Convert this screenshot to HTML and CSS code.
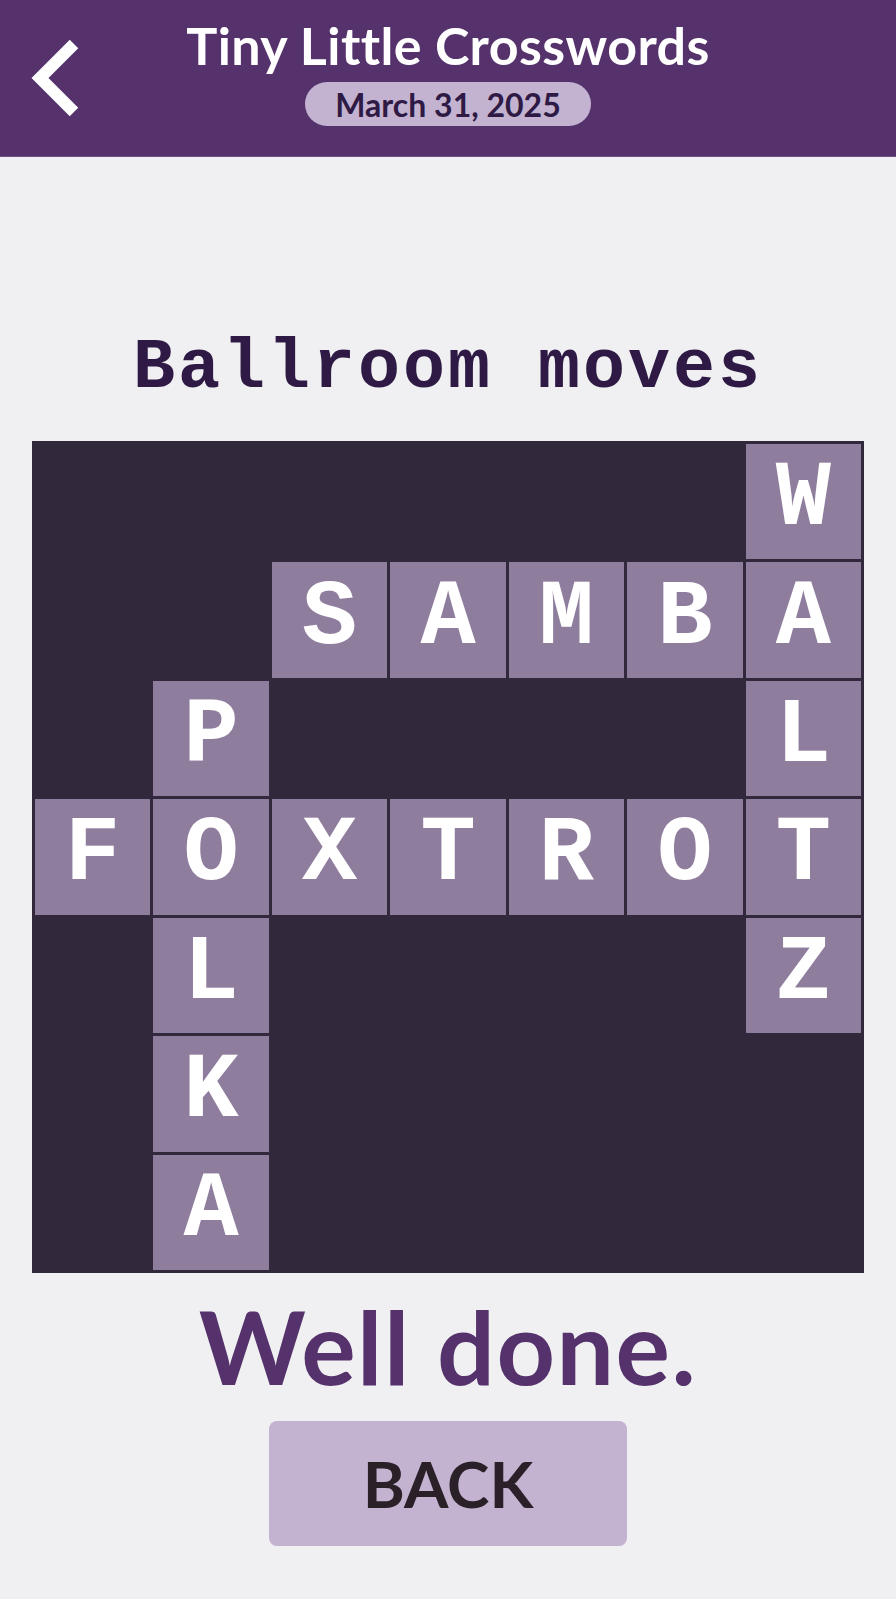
FILE: index.html
```html
<!DOCTYPE html>
<html lang="en">
<head>
<meta charset="utf-8">
<title>Tiny Little Crosswords</title>
<link rel="stylesheet" href="styles.css">
</head>
<body>
<header class="topbar">
  <button class="back-link" aria-label="Back">
    <svg width="56" height="80" viewBox="0 0 56 80">
      <polyline points="48,6 14,40 48,74" fill="none" stroke="#ffffff" stroke-width="12" stroke-linejoin="miter"/>
    </svg>
  </button>
  <div class="heading">
    <h1 class="app-title">Tiny Little Crosswords</h1>
    <div class="date-pill">March 31, 2025</div>
  </div>
  <div class="spacer"></div>
</header>

<main class="puzzle">
  <h2 class="theme">Ballroom moves</h2>

  <div class="board">
    <div class="cell"></div><div class="cell"></div><div class="cell"></div><div class="cell"></div><div class="cell"></div><div class="cell"></div><div class="cell on">W</div>
    <div class="cell"></div><div class="cell"></div><div class="cell on">S</div><div class="cell on">A</div><div class="cell on">M</div><div class="cell on">B</div><div class="cell on">A</div>
    <div class="cell"></div><div class="cell on">P</div><div class="cell"></div><div class="cell"></div><div class="cell"></div><div class="cell"></div><div class="cell on">L</div>
    <div class="cell on">F</div><div class="cell on">O</div><div class="cell on">X</div><div class="cell on">T</div><div class="cell on">R</div><div class="cell on">O</div><div class="cell on">T</div>
    <div class="cell"></div><div class="cell on">L</div><div class="cell"></div><div class="cell"></div><div class="cell"></div><div class="cell"></div><div class="cell on">Z</div>
    <div class="cell"></div><div class="cell on">K</div><div class="cell"></div><div class="cell"></div><div class="cell"></div><div class="cell"></div><div class="cell"></div>
    <div class="cell"></div><div class="cell on">A</div><div class="cell"></div><div class="cell"></div><div class="cell"></div><div class="cell"></div><div class="cell"></div>
  </div>

  <p class="result">Well done.</p>
  <button class="back-button">BACK</button>
</main>
</body>
</html>
```

FILE: styles.css
```css
* {
  box-sizing: border-box;
}

html, body {
  margin: 0;
  padding: 0;
}

body {
  background: #f0f0f3;
  font-family: Lato, "Noto Sans", sans-serif;
  width: 896px;
  min-height: 1599px;
}

/* purple app bar */
.topbar {
  height: 157px;
  background: #55326b;
  display: grid;
  grid-template-columns: 120px 1fr 120px;
  align-items: start;
  border-bottom: 1px solid #6d5482;
}

.back-link {
  background: none;
  border: 0;
  padding: 0 0 0 26px;
  margin: 38px 0 0;
  display: flex;
  align-items: center;
  cursor: pointer;
}

.heading {
  display: flex;
  flex-direction: column;
  align-items: center;
  padding-top: 14px;
}

.app-title {
  margin: 0;
  color: #ffffff;
  font-size: 52px;
  font-weight: 700;
  letter-spacing: 0.4px;
  line-height: 62px;
}

.date-pill {
  margin-top: 6px;
  background: #c3b3d0;
  color: #2e1a44;
  border-radius: 22px;
  height: 44px;
  width: 286px;
  display: flex;
  align-items: center;
  justify-content: center;
  font-size: 32px;
  font-weight: 700;
}

/* puzzle body */
.puzzle {
  display: flex;
  flex-direction: column;
  align-items: center;
}

.theme {
  margin: 175px 0 0;
  font-family: "Liberation Mono", "Courier New", monospace;
  font-weight: 700;
  font-size: 70px;
  letter-spacing: 3px;
  line-height: 74px;
  color: #2e1a44;
}

.board {
  margin-top: 35px;
  width: 832px;
  height: 832px;
  padding: 3px;
  background: #32283c;
  display: grid;
  grid-template-columns: repeat(7, 1fr);
  grid-template-rows: repeat(7, 1fr);
  gap: 3px;
}

.cell {
  display: flex;
  align-items: center;
  justify-content: center;
  font-family: "Liberation Mono", "Courier New", monospace;
  font-size: 92px;
  font-weight: 700;
  color: #ffffff;
  padding-bottom: 4px;
}

.cell.on {
  background: #8f7d9e;
}

.result {
  margin: 18px 0 0;
  font-size: 102px;
  font-weight: 700;
  letter-spacing: 1.5px;
  line-height: 110px;
  color: #55326b;
}

.back-button {
  margin-top: 20px;
  width: 358px;
  height: 125px;
  border: 0;
  border-radius: 8px;
  background: #c3b3d0;
  color: #2a2028;
  font-family: Lato, "Noto Sans", sans-serif;
  font-size: 64px;
  font-weight: 700;
  cursor: pointer;
}
```
